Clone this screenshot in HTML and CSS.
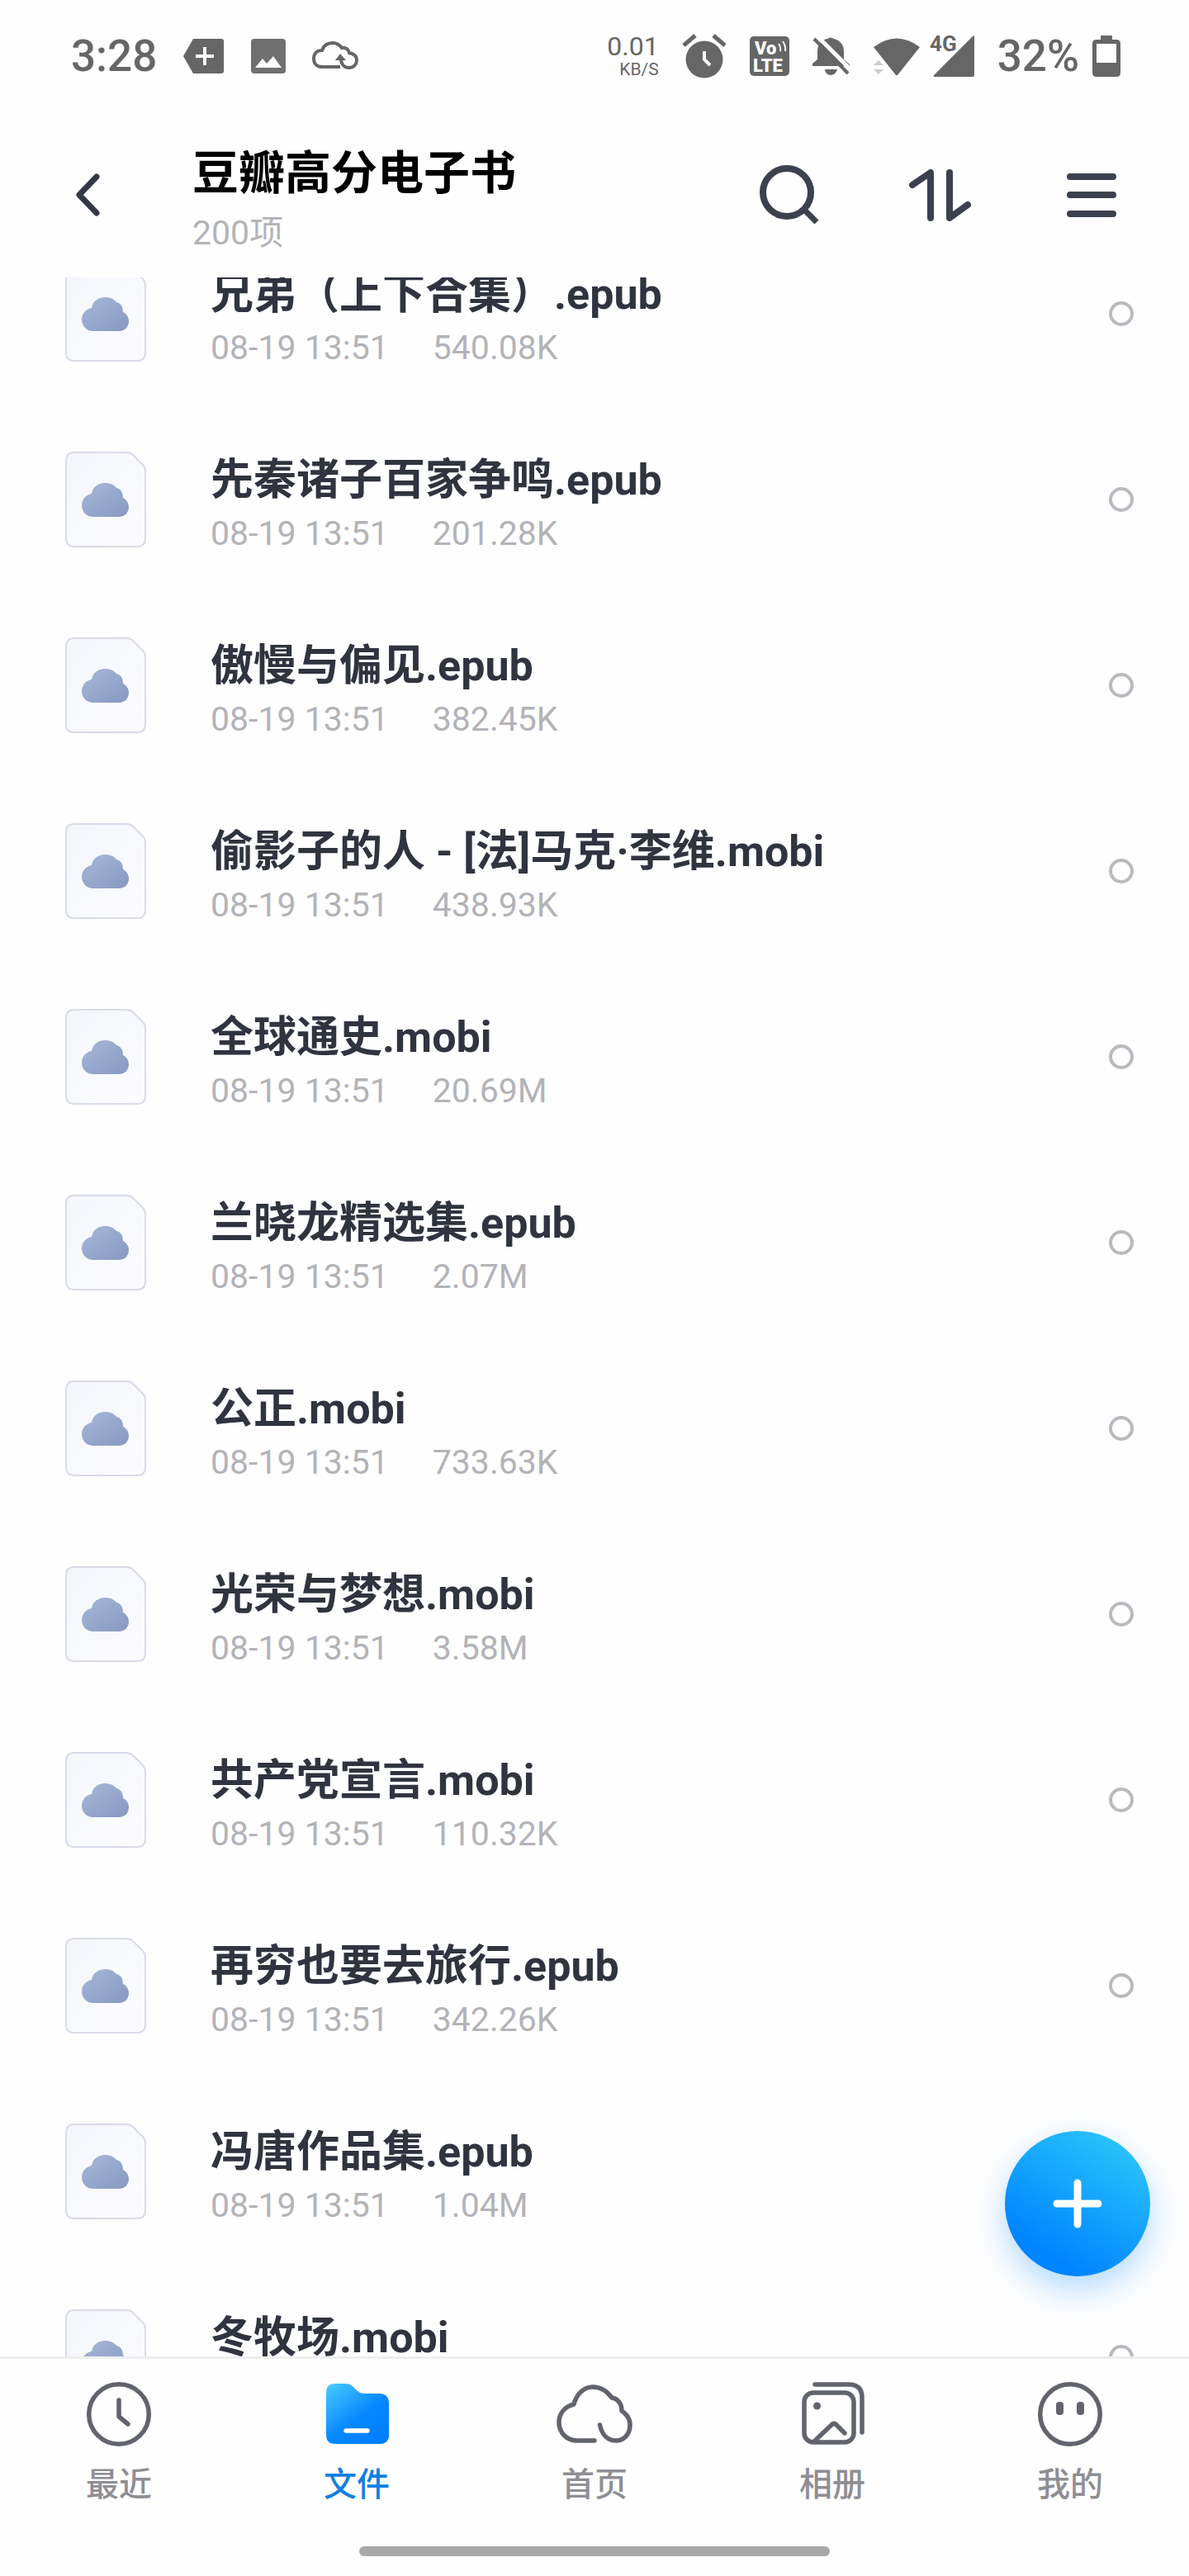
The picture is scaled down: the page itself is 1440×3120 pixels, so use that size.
FILE: index.html
```html
<!DOCTYPE html>
<html lang="zh-CN">
<head>
    <title>豆瓣高分电子书</title>
    <meta charset="UTF-8">
    <meta name="viewport" content="width=device-width, initial-scale=1.0">
    <link rel="stylesheet" href="styles.css">
</head>
<body>
    <!-- Shared file icon -->
    <svg class="sprite" width="0" height="0">
        <defs>
            <linearGradient id="paper" x1="0" y1="0" x2="1" y2="1">
                <stop offset="0" stop-color="#f4f6fb"/>
                <stop offset="1" stop-color="#fcfcff"/>
            </linearGradient>
            <linearGradient id="cloud" x1="0" y1="0" x2="1" y2="1">
                <stop offset="0" stop-color="#a6b8d8"/>
                <stop offset="1" stop-color="#8798c2"/>
            </linearGradient>
        </defs>
        <symbol id="file" viewBox="0 0 98 116">
            <path d="M11 1H74Q79 1 82 4L94 16Q97 19 97 24V105Q97 115 87 115H11Q1 115 1 105V11Q1 1 11 1Z" fill="url(#paper)" stroke="#d9daea" stroke-width="2"/>
            <path d="M34 79C26 79 20 73 20 65C20 58 25 52 32 51C33 43 40 38 48 38C54 38 59 40 62 44C67 45 70 49 70 56C74 58 77 62 77 67C77 74 72 79 65 79Z" fill="url(#cloud)"/>
        </symbol>
    </svg>

    <div class="app">
        <div class="status-bar">
            <div class="status-group left">
                <span class="status-text">3:28</span>
                <svg width="50" height="44" viewBox="0 0 50 44"><path d="M12 1H46Q49 1 49 4V40Q49 43 46 43H12L0 22Z" fill="#666"/><path d="M26 11V33M15 22H37" stroke="#fff" stroke-width="4"/></svg>
                <svg width="42" height="44" viewBox="0 0 42 44"><rect y="1" width="42" height="42" rx="4" fill="#707070"/><path d="M5 36L14 25L19 31L27 22L37 36Z" fill="#fff"/></svg>
                <svg width="56" height="44" viewBox="0 0 56 44"><path d="M34 35H12C6 35 2 31 2 25C2 19 6 15 12 15C14 9 19 6 25 6C30 6 33 8 36 12C41 11 44 14 45 18C50 19 54 22 54 27C54 32 50 36 45 36C39 36 35 32 35 25" fill="none" stroke="#666" stroke-width="4"/><path d="M28 27L34 19L41 27Z" fill="#666"/></svg>
            </div>
            <div class="status-group">
                <div class="net-speed"><span>0.01</span><small>KB/S</small></div>
                <svg width="54" height="54" viewBox="0 0 54 54"><circle cx="27" cy="31" r="22.5" fill="#666"/><path d="M2 14L16 2M38 2L52 14" stroke="#666" stroke-width="5"/><path d="M27 21V31L34 38" fill="none" stroke="#fff" stroke-width="4"/></svg>
                <svg width="48" height="48" viewBox="0 0 48 48"><rect width="48" height="48" rx="5" fill="#666"/><text x="6" y="22" class="volte">Vo</text><text x="4" y="43" class="volte">LTE</text><path d="M35 9Q38 13 37 18M40 6Q44 12 43 18" fill="none" stroke="#fff" stroke-width="2"/></svg>
                <svg width="46" height="46" viewBox="0 0 46 46"><path d="M0 35V32L6 27V17C6 8 12 3 18 2Q22 -1 26 2C34 4 38 10 38 17V27L45 33V35Z" fill="#666"/><path d="M15 39H30Q28 46 22 46Q16 46 15 39Z" fill="#666"/><path d="M6 -1L48 41" stroke="#fff" stroke-width="5"/><path d="M2 2L43 44" stroke="#666" stroke-width="4"/></svg>
                <div class="status-pair signal">
                    <svg width="56" height="50" viewBox="0 0 56 50"><path d="M0 14Q28 -7 56 14L29 48H27Z" fill="#666"/><path d="M0 36L6 30L12 36ZM0 41H12L6 47Z" fill="#ccc"/></svg>
                    <svg width="54" height="52" viewBox="0 0 54 52"><path d="M54 1V49Q54 51 52 51H6Q4 51 5 49L52 2Z" fill="#666"/><text x="0" y="20" class="network">4G</text></svg>
                </div>
                <div class="status-pair">
                    <span class="status-text">32%</span>
                    <svg width="34" height="52" viewBox="0 0 34 52"><path d="M10 6V2Q10 1 11 1H23Q24 1 24 2V6H29Q34 6 34 11V46Q34 51 29 51H5Q0 51 0 46V11Q0 6 5 6Z" fill="#666"/><rect x="5" y="11" width="24" height="23" fill="#fff"/></svg>
                </div>
            </div>
        </div>

        <header class="header">
            <button class="icon-btn" aria-label="返回">
                <svg width="76" height="76" viewBox="0 0 76 76"><path d="M51 16L30 38L51 60" fill="none" stroke="#343845" stroke-width="7" stroke-linecap="round" stroke-linejoin="round"/></svg>
            </button>
            <div class="heading">
                <h1>豆瓣高分电子书</h1>
                <p>200项</p>
            </div>
            <div class="tools">
                <button class="icon-btn" aria-label="搜索">
                    <svg width="76" height="76" viewBox="0 0 76 76"><g fill="none" stroke="#3c414d" stroke-width="8"><circle cx="35" cy="35" r="29"/><path d="M56 56L71 71" stroke-width="7"/></g></svg>
                </button>
                <button class="icon-btn" aria-label="排序">
                    <svg width="76" height="76" viewBox="0 0 76 76"><path d="M4 26L26 11V66M49 11V66L71 50" fill="none" stroke="#3c414d" stroke-width="8" stroke-linecap="round" stroke-linejoin="round"/></svg>
                </button>
                <button class="icon-btn" aria-label="菜单">
                    <svg width="76" height="76" viewBox="0 0 76 76"><path d="M12 16H64M12 38H64M12 61H64" stroke="#3c414d" stroke-width="8" stroke-linecap="round"/></svg>
                </button>
            </div>
        </header>

        <main class="content">
            <ul class="file-list">
                <li class="file">
                    <svg class="file-icon"><use href="#file"/></svg>
                    <div class="file-info">
                        <label for="f1">兄弟（上下合集）.epub</label>
                        <p><span>08-19 13:51</span><span>540.08K</span></p>
                    </div>
                    <input type="checkbox" id="f1">
                </li>
                <li class="file">
                    <svg class="file-icon"><use href="#file"/></svg>
                    <div class="file-info">
                        <label for="f2">先秦诸子百家争鸣.epub</label>
                        <p><span>08-19 13:51</span><span>201.28K</span></p>
                    </div>
                    <input type="checkbox" id="f2">
                </li>
                <li class="file">
                    <svg class="file-icon"><use href="#file"/></svg>
                    <div class="file-info">
                        <label for="f3">傲慢与偏见.epub</label>
                        <p><span>08-19 13:51</span><span>382.45K</span></p>
                    </div>
                    <input type="checkbox" id="f3">
                </li>
                <li class="file">
                    <svg class="file-icon"><use href="#file"/></svg>
                    <div class="file-info">
                        <label for="f4">偷影子的人 - [法]马克·李维.mobi</label>
                        <p><span>08-19 13:51</span><span>438.93K</span></p>
                    </div>
                    <input type="checkbox" id="f4">
                </li>
                <li class="file">
                    <svg class="file-icon"><use href="#file"/></svg>
                    <div class="file-info">
                        <label for="f5">全球通史.mobi</label>
                        <p><span>08-19 13:51</span><span>20.69M</span></p>
                    </div>
                    <input type="checkbox" id="f5">
                </li>
                <li class="file">
                    <svg class="file-icon"><use href="#file"/></svg>
                    <div class="file-info">
                        <label for="f6">兰晓龙精选集.epub</label>
                        <p><span>08-19 13:51</span><span>2.07M</span></p>
                    </div>
                    <input type="checkbox" id="f6">
                </li>
                <li class="file">
                    <svg class="file-icon"><use href="#file"/></svg>
                    <div class="file-info">
                        <label for="f7">公正.mobi</label>
                        <p><span>08-19 13:51</span><span>733.63K</span></p>
                    </div>
                    <input type="checkbox" id="f7">
                </li>
                <li class="file">
                    <svg class="file-icon"><use href="#file"/></svg>
                    <div class="file-info">
                        <label for="f8">光荣与梦想.mobi</label>
                        <p><span>08-19 13:51</span><span>3.58M</span></p>
                    </div>
                    <input type="checkbox" id="f8">
                </li>
                <li class="file">
                    <svg class="file-icon"><use href="#file"/></svg>
                    <div class="file-info">
                        <label for="f9">共产党宣言.mobi</label>
                        <p><span>08-19 13:51</span><span>110.32K</span></p>
                    </div>
                    <input type="checkbox" id="f9">
                </li>
                <li class="file">
                    <svg class="file-icon"><use href="#file"/></svg>
                    <div class="file-info">
                        <label for="f10">再穷也要去旅行.epub</label>
                        <p><span>08-19 13:51</span><span>342.26K</span></p>
                    </div>
                    <input type="checkbox" id="f10">
                </li>
                <li class="file">
                    <svg class="file-icon"><use href="#file"/></svg>
                    <div class="file-info">
                        <label for="f11">冯唐作品集.epub</label>
                        <p><span>08-19 13:51</span><span>1.04M</span></p>
                    </div>
                    <input type="checkbox" id="f11">
                </li>
                <li class="file">
                    <svg class="file-icon"><use href="#file"/></svg>
                    <div class="file-info">
                        <label for="f12">冬牧场.mobi</label>
                    </div>
                    <input type="checkbox" id="f12">
                </li>
            </ul>
            <button class="add-btn" aria-label="添加">
                <svg width="60" height="60" viewBox="0 0 60 60"><path d="M30 5V55M5 30H55" stroke="#fff" stroke-width="9" stroke-linecap="round"/></svg>
            </button>
        </main>

        <footer class="bottom">
            <nav class="tabs">
                <a href="#">
                    <svg class="tab-icon" viewBox="0 0 96 96"><circle cx="48" cy="48" r="36.3"/><path d="M48 31V51L59 60"/></svg>
                    最近
                </a>
                <a href="#" class="active">
                    <svg class="tab-icon" viewBox="0 0 96 96">
                        <defs>
                            <linearGradient id="folder" x1="0" y1="0" x2="0.8" y2="1">
                                <stop offset="0" stop-color="#4acdff"/>
                                <stop offset="0.6" stop-color="#0687ff"/>
                                <stop offset="1" stop-color="#007fff"/>
                            </linearGradient>
                        </defs>
                        <path d="M22 11H34Q40 11 44 15L49 20Q52 23 57 23H75Q87 23 87 35V73Q87 84 76 84H22Q11 84 11 73V22Q11 11 22 11Z" fill="url(#folder)" stroke="none"/>
                        <path d="M35 68H61" stroke="#fff"/>
                    </svg>
                    文件
                </a>
                <a href="#">
                    <svg class="tab-icon" viewBox="0 0 96 96"><path d="M48 80H27C14 80 5 70 5 58C5 47 12 39 23 36C26 24 35 15 46 15C56 15 63 20 69 28C76 29 81 35 81 44C87 48 91 54 91 61C91 72 84 80 74 80C64 80 57 73 54.500 61"/></svg>
                    首页
                </a>
                <a href="#">
                    <svg class="tab-icon" viewBox="0 0 96 96"><rect x="14" y="22" width="60" height="60" rx="11"/><path d="M27 12H68Q84 12 84 28V70M26 81L47 61Q50 58 53 61L63 71"/><circle cx="29.500" cy="38" r="4.500" fill="#62646d" stroke="none"/></svg>
                    相册
                </a>
                <a href="#">
                    <svg class="tab-icon" viewBox="0 0 96 96"><circle cx="48" cy="48" r="36.3"/><rect x="31" y="33" width="9" height="16" rx="4" fill="#62646d" stroke="none"/><rect x="56" y="33" width="9" height="16" rx="4" fill="#62646d" stroke="none"/></svg>
                    我的
                </a>
            </nav>
            <div class="home-bar"></div>
        </footer>
    </div>
</body>
</html>
```

FILE: styles.css
```css
* {
    margin: 0;
    padding: 0;
    box-sizing: border-box;
}

body {
    font-family: Roboto, "Noto Sans CJK SC", sans-serif;
    background-color: #fefefe;
    color: #30343f;
}

button {
    border: none;
    background: none;
    cursor: pointer;
}

svg {
    display: block;
    flex-shrink: 0;
    overflow: visible;
}

.sprite {
    position: absolute;
}

.app {
    display: flex;
    flex-direction: column;
    height: 100vh;
}

/* Status bar */
.status-bar {
    display: flex;
    justify-content: space-between;
    align-items: center;
    height: 136px;
    padding: 0 83px 0 86px;
}

.status-group {
    display: flex;
    align-items: center;
    gap: 28px;
}

.status-group.left {
    gap: 32px;
}

.status-pair {
    display: flex;
    align-items: center;
    gap: 16px;
}

.status-pair.signal {
    gap: 12px;
}

.status-text {
    font-size: 53px;
    line-height: 64px;
    font-weight: 500;
    color: #666;
}

.net-speed {
    display: flex;
    flex-direction: column;
    align-items: flex-end;
    font-size: 32px;
    line-height: 32px;
    color: #666;
}

.net-speed small {
    font-size: 21px;
    line-height: 24px;
}

.volte {
    font-size: 22px;
    font-weight: 900;
    fill: #fff;
}

.network {
    font-size: 26px;
    font-weight: 700;
    fill: #666;
}

/* Header */
.header {
    display: flex;
    align-items: center;
    height: 200px;
    padding: 0 80px 0 66px;
}

.icon-btn {
    width: 76px;
    height: 76px;
}

.heading {
    flex: 1;
    padding: 16px 0 0 91px;
}

.heading h1 {
    margin-bottom: 4px;
    font-size: 56px;
    line-height: 72px;
    font-weight: 700;
    color: #000;
}

.heading p {
    font-size: 41px;
    line-height: 64px;
    color: #b3b3b8;
}

.tools {
    display: flex;
    gap: 107px;
}

/* File list */
.content {
    position: relative;
    flex: 1;
    min-height: 0;
    overflow: hidden;
}

.file-list {
    list-style: none;
    margin-top: -69px;
}

.file {
    display: flex;
    align-items: center;
    height: 225px;
    padding: 0 67px 0 79px;
}

.file-icon {
    width: 98px;
    height: 116px;
}

.file-info {
    flex: 1;
    height: 117px;
    padding-left: 78px;
}

.file-info label {
    display: block;
    font-size: 52px;
    line-height: 72px;
    font-weight: 700;
}

.file-info p {
    display: flex;
    gap: 53px;
    font-size: 41px;
    line-height: 56px;
    color: #b3b3b8;
}

.file input {
    appearance: none;
    width: 30px;
    height: 30px;
    border: 4px solid #b9b9c0;
    border-radius: 50%;
}

.add-btn {
    position: absolute;
    right: 47px;
    bottom: 97px;
    display: flex;
    justify-content: center;
    align-items: center;
    width: 176px;
    height: 176px;
    border-radius: 50%;
    background: linear-gradient(212deg, #2bc4fa 10%, #0084ff 80%);
    box-shadow: 0 16px 40px rgba(0, 132, 255, 0.3);
}

/* Bottom tabs */
.bottom {
    height: 266px;
    border-top: 3px solid #eeeef0;
}

.tabs {
    display: flex;
    padding-top: 19px;
}

.tabs a {
    flex: 1;
    display: flex;
    flex-direction: column;
    align-items: center;
    gap: 14px;
    font-size: 40px;
    line-height: 48px;
    font-weight: 500;
    color: #8e8e94;
    text-decoration: none;
}

.tabs .active {
    color: #127fe0;
}

.tab-icon {
    width: 96px;
    height: 96px;
    fill: none;
    stroke: #62646d;
    stroke-width: 5.5px;
    stroke-linecap: round;
    stroke-linejoin: round;
}

.home-bar {
    width: 570px;
    height: 12px;
    margin: 50px auto 0;
    border-radius: 6px;
    background-color: #a8a8a8;
}
```
